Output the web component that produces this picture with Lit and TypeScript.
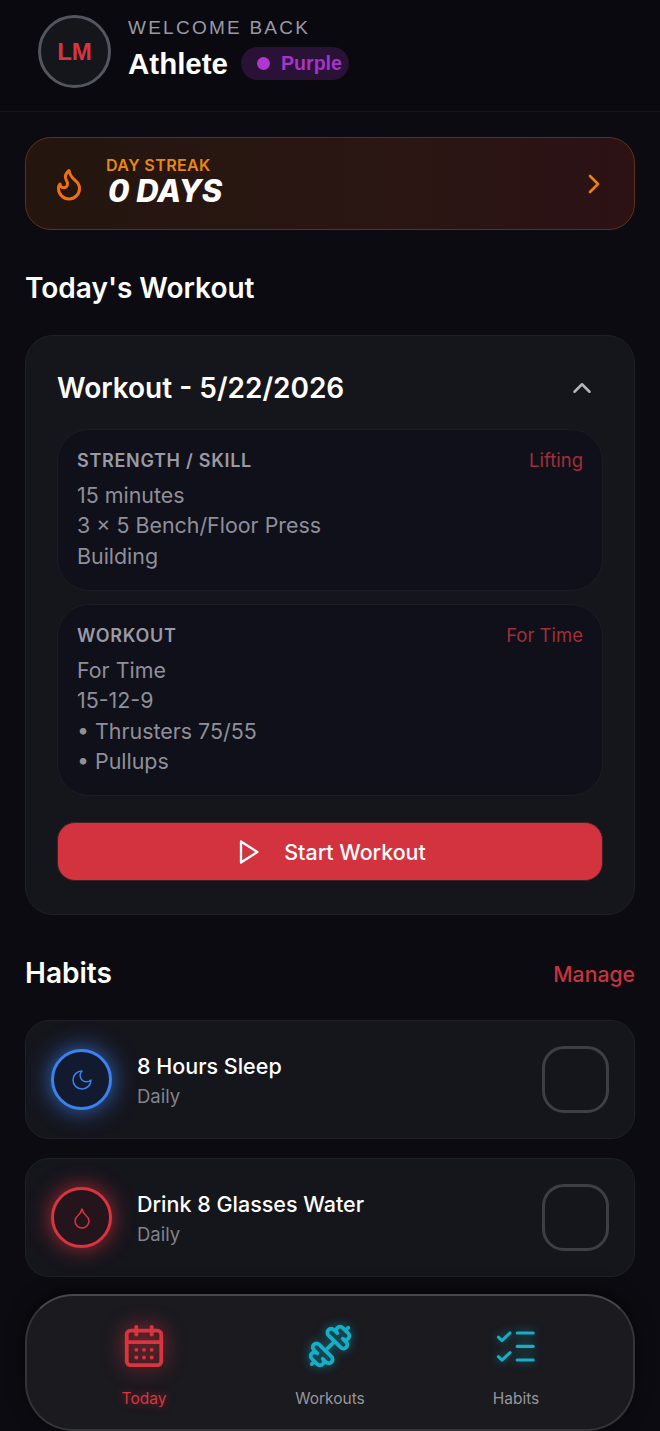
import { LitElement, html, css, svg } from "lit";
import { customElement } from "lit/decorators.js";

const icon = (body: unknown, size: number, sw = 2) => html`<svg
  width=${size}
  height=${size}
  viewBox="0 0 24 24"
  fill="none"
  stroke="currentColor"
  stroke-width=${sw}
  stroke-linecap="round"
  stroke-linejoin="round"
>${body}</svg>`;

const flame = svg`<path d="M8.5 14.5A2.5 2.5 0 0 0 11 12c0-1.38-.5-2-1-3-1.072-2.143-.224-4.054 2-6 .5 2.5 2 4.9 4 6.5 2 1.6 3 3.5 3 5.5a7 7 0 1 1-14 0c0-1.153.433-2.294 1-3a2.5 2.5 0 0 0 2.5 2.5z"/>`;
const moon = svg`<path d="M12 3a6 6 0 0 0 9 9 9 9 0 1 1-9-9Z"/>`;
const drop = svg`<path d="M12 22a7 7 0 0 0 7-7c0-2-1-3.9-3-5.5s-3.5-4-4-6.5c-.5 2.5-2 4.9-4 6.5C6 11.1 5 13 5 15a7 7 0 0 0 7 7z"/>`;
const play = svg`<polygon points="6 3 20 12 6 21 6 3"/>`;
const calendar = svg`<path d="M8 2v4"/><path d="M16 2v4"/><rect width="18" height="18" x="3" y="4" rx="2"/><path d="M3 10h18"/><path d="M8 14h.01"/><path d="M12 14h.01"/><path d="M16 14h.01"/><path d="M8 18h.01"/><path d="M12 18h.01"/><path d="M16 18h.01"/>`;
// mirrored in the picture: the bar runs bottom-left to top-right
const dumbbell = svg`<g transform="matrix(-1 0 0 1 24 0)"><path d="M14.4 14.4 9.6 9.6"/><path d="M18.657 21.485a2 2 0 1 1-2.829-2.828l-1.767 1.768a2 2 0 1 1-2.829-2.829l6.364-6.364a2 2 0 1 1 2.829 2.829l-1.768 1.767a2 2 0 1 1 2.828 2.829z"/><path d="m21.5 21.5-1.4-1.4"/><path d="M3.9 3.9 2.5 2.5"/><path d="M6.404 12.768a2 2 0 1 1-2.829-2.829l1.768-1.767a2 2 0 1 1-2.828-2.829l2.828-2.828a2 2 0 1 1 2.829 2.828l1.767-1.768a2 2 0 1 1 2.829 2.829z"/></g>`;
const listChecks = svg`<path d="m2.8 7.4 1.9 1.8 4.2-4"/><path d="m2.8 17.6 1.9 1.8 4.2-4"/><path d="M12.6 5.2h8.4"/><path d="M12.6 12.2h8.4"/><path d="M12.6 19.3h8.4"/>`;

@customElement("app-root")
export class AppRoot extends LitElement {
  static styles = css`
    :host {
      display: block;
      position: relative;
      height: 1431px;
      overflow: hidden;
      background: #0b0b11;
      color: #fff;
      font-family: Inter, "Liberation Sans", sans-serif;
    }

    .header {
      display: flex;
      align-items: center;
      gap: 18px;
      height: 112px;
      padding: 0 38px 8px;
      box-sizing: border-box;
      border-bottom: 1px solid #16161c;
      background: #09090f;
    }
    .avatar {
      width: 73px;
      height: 73px;
      box-sizing: border-box;
      border: 3px solid #55555f;
      border-radius: 50%;
      background: #15151c;
      display: flex;
      align-items: center;
      justify-content: center;
      color: #d9343f;
      font: 700 24px "Liberation Sans", sans-serif;
    }
    .who {
      margin: -5px 0 0 -1px;
    }
    .welcome {
      font: 400 19px/22px "Liberation Sans", sans-serif;
      letter-spacing: 2.25px;
      color: #9a9aa4;
    }
    .name-row {
      display: flex;
      align-items: center;
      gap: 13px;
      margin-top: 7px;
    }
    .name {
      font: 700 29.5px/36px "Liberation Sans", sans-serif;
    }
    .rank {
      display: flex;
      align-items: center;
      gap: 11px;
      height: 33px;
      padding: 0 7px 0 16px;
      border-radius: 17px;
      background: #2a1136;
      color: #a733c9;
      font: 700 19.6px "Liberation Sans", sans-serif;
    }
    .rank i {
      width: 13px;
      height: 13px;
      border-radius: 50%;
      background: #ae36d2;
    }

    .main {
      padding: 25px 25px 0;
    }
    .streak {
      display: flex;
      align-items: center;
      height: 93px;
      box-sizing: border-box;
      padding: 0 24px 0 25px;
      border: 1px solid #5b3318;
      border-radius: 26px;
      background: linear-gradient(90deg, #24150f, #2a1612 60%, #2c1115);
    }
    .streak .flame {
      color: #f0700f;
      display: flex;
    }
    .streak-text {
      margin: -3px 0 0 19px;
      flex: 1;
    }
    .streak-label {
      font-size: 16px;
      line-height: 17px;
      font-weight: 600;
      letter-spacing: 0.4px;
      color: #e8890f;
    }
    .streak-value {
      font-size: 31px;
      line-height: 33px;
      font-weight: 800;
      font-style: italic;
      margin-left: 2px;
    }
    .streak .chev {
      color: #e8810f;
      display: flex;
    }

    h2 {
      margin: 0;
      font-size: 28px;
      line-height: 34px;
      font-weight: 600;
    }
    .section-title {
      margin-top: 41px;
    }

    .card {
      margin-top: 30px;
      height: 580px;
      box-sizing: border-box;
      padding: 32px 32px 0;
      border: 1px solid #202028;
      border-radius: 28px;
      background: #15151c;
    }
    .card-inner {
      margin: 0 -1px;
    }
    .card-head {
      display: flex;
      justify-content: space-between;
      align-items: center;
      height: 40px;
      padding-right: 6px;
    }
    .card-head h3 {
      margin: 0;
      font-size: 28px;
      font-weight: 600;
    }
    .card-head span {
      display: flex;
      color: #b5b5bd;
    }
    .part {
      margin-top: 13px;
      padding: 19px 19px 0;
      box-sizing: border-box;
      border: 1px solid #1c1c24;
      border-radius: 32px;
      background: #10101a;
    }
    .card-head + .part {
      margin-top: 21px;
    }
    .part-head {
      display: flex;
      justify-content: space-between;
      font-size: 18.5px;
      line-height: 24px;
    }
    .part-head b {
      font-size: 18px;
      font-weight: 600;
      color: #9a9aa4;
      letter-spacing: 0.7px;
    }
    .part-head span {
      margin-top: -1px;
      color: #a12f38;
    }
    .lines {
      margin-top: 7px;
      font-size: 21.4px;
      line-height: 30.4px;
      color: #8f8f99;
    }

    .start {
      display: flex;
      align-items: center;
      justify-content: center;
      gap: 22px;
      width: 100%;
      height: 59px;
      margin-top: 26px;
      border: 1px solid #3f2126;
      border-radius: 18px;
      background: #d2333f;
      color: #fff;
      font: 500 21.4px Inter, sans-serif;
    }

    .habits-head {
      display: flex;
      justify-content: space-between;
      align-items: center;
      margin-top: 41px;
    }
    .habits-head a {
      color: #c9333e;
      font-size: 21.2px;
      font-weight: 500;
      margin-top: 2px;
    }

    .habit {
      display: flex;
      align-items: center;
      height: 119px;
      box-sizing: border-box;
      margin-top: 19px;
      padding: 0 25px;
      border: 1px solid #20202a;
      border-radius: 24px;
      background: #15151c;
    }
    .habits-head + .habit {
      margin-top: 30px;
    }
    .ring {
      width: 61px;
      height: 61px;
      box-sizing: border-box;
      border: 3px solid currentColor;
      border-radius: 50%;
      display: flex;
      align-items: center;
      justify-content: center;
      flex: none;
    }
    .ring.blue {
      color: #3b82f0;
      background: #121a30;
      box-shadow: 0 0 24px rgba(59, 130, 240, 0.8);
    }
    .ring.red {
      color: #d9343f;
      background: #24141b;
      box-shadow: 0 0 22px rgba(217, 52, 63, 0.75);
    }
    .habit-text {
      flex: 1;
      margin: 3px 0 0 25px;
    }
    .habit-name {
      font-size: 21.5px;
      line-height: 30px;
      font-weight: 500;
    }
    .habit-sub {
      font-size: 18.5px;
      line-height: 31px;
      color: #83838d;
    }
    .check {
      width: 67px;
      height: 67px;
      box-sizing: border-box;
      border: 3px solid #3e3e46;
      border-radius: 22px;
    }

    .nav {
      position: absolute;
      left: 25px;
      right: 25px;
      bottom: 0;
      height: 137px;
      box-sizing: border-box;
      display: grid;
      grid-template-columns: repeat(3, 1fr);
      padding: 0 24px;
      border: 2px solid #33333a;
      border-top-color: #46464c;
      border-radius: 48px;
      background: #1a1a1f;
      box-shadow: 0 -4px 18px rgba(0, 0, 0, 0.5);
    }
    .tab {
      display: flex;
      flex-direction: column;
      align-items: center;
      padding-top: 27px;
      font-size: 15.5px;
      line-height: 20px;
      color: #96969c;
    }
    .tab .ic {
      display: flex;
      height: 46px;
      margin-bottom: 20px;
      align-items: center;
    }
    .tab.active {
      color: #d9343f;
      text-shadow: 0 0 10px rgba(217, 52, 63, 0.6);
    }
    .tab.active .ic {
      filter: drop-shadow(0 0 10px rgba(217, 52, 63, 0.9));
    }
    .tab .ic.teal {
      color: #14aec6;
      filter: drop-shadow(0 0 5px rgba(20, 174, 198, 0.6));
    }
  `;

  render() {
    return html`
      <div class="header">
        <div class="avatar">LM</div>
        <div class="who">
          <div class="welcome">WELCOME BACK</div>
          <div class="name-row">
            <div class="name">Athlete</div>
            <div class="rank"><i></i>Purple</div>
          </div>
        </div>
      </div>

      <div class="main">
        <div class="streak">
          <span class="flame">${icon(flame, 36)}</span>
          <div class="streak-text">
            <div class="streak-label">DAY STREAK</div>
            <div class="streak-value">0 DAYS</div>
          </div>
          <span class="chev">${icon(svg`<path d="m9 18 6-6-6-6"/>`, 32)}</span>
        </div>

        <h2 class="section-title">Today's Workout</h2>

        <div class="card">
          <div class="card-inner">
            <div class="card-head">
              <h3>Workout - 5/22/2026</h3>
              <span>${icon(svg`<path d="m18 15-6-6-6 6"/>`, 30)}</span>
            </div>
            <div class="part" style="height:162px">
              <div class="part-head"><b>STRENGTH / SKILL</b><span>Lifting</span></div>
              <div class="lines">
                15 minutes<br />3 × 5 Bench/Floor Press<br />Building
              </div>
            </div>
            <div class="part" style="height:192px">
              <div class="part-head"><b>WORKOUT</b><span>For Time</span></div>
              <div class="lines">
                For Time<br />15-12-9<br />• Thrusters 75/55<br />• Pullups
              </div>
            </div>
            <button class="start">${icon(play, 28)}Start Workout</button>
          </div>
        </div>

        <div class="habits-head">
          <h2>Habits</h2>
          <a>Manage</a>
        </div>

        <div class="habit">
          <div class="ring blue">${icon(moon, 24, 1.5)}</div>
          <div class="habit-text">
            <div class="habit-name">8 Hours Sleep</div>
            <div class="habit-sub">Daily</div>
          </div>
          <div class="check"></div>
        </div>
        <div class="habit">
          <div class="ring red">${icon(drop, 24, 1.5)}</div>
          <div class="habit-text">
            <div class="habit-name">Drink 8 Glasses Water</div>
            <div class="habit-sub">Daily</div>
          </div>
          <div class="check"></div>
        </div>
      </div>

      <nav class="nav">
        <div class="tab active">
          <span class="ic">${icon(calendar, 46, 2)}</span>Today
        </div>
        <div class="tab">
          <span class="ic teal">${icon(dumbbell, 46, 2)}</span>Workouts
        </div>
        <div class="tab">
          <span class="ic teal">${icon(listChecks, 46, 1.6)}</span>Habits
        </div>
      </nav>
    `;
  }
}
